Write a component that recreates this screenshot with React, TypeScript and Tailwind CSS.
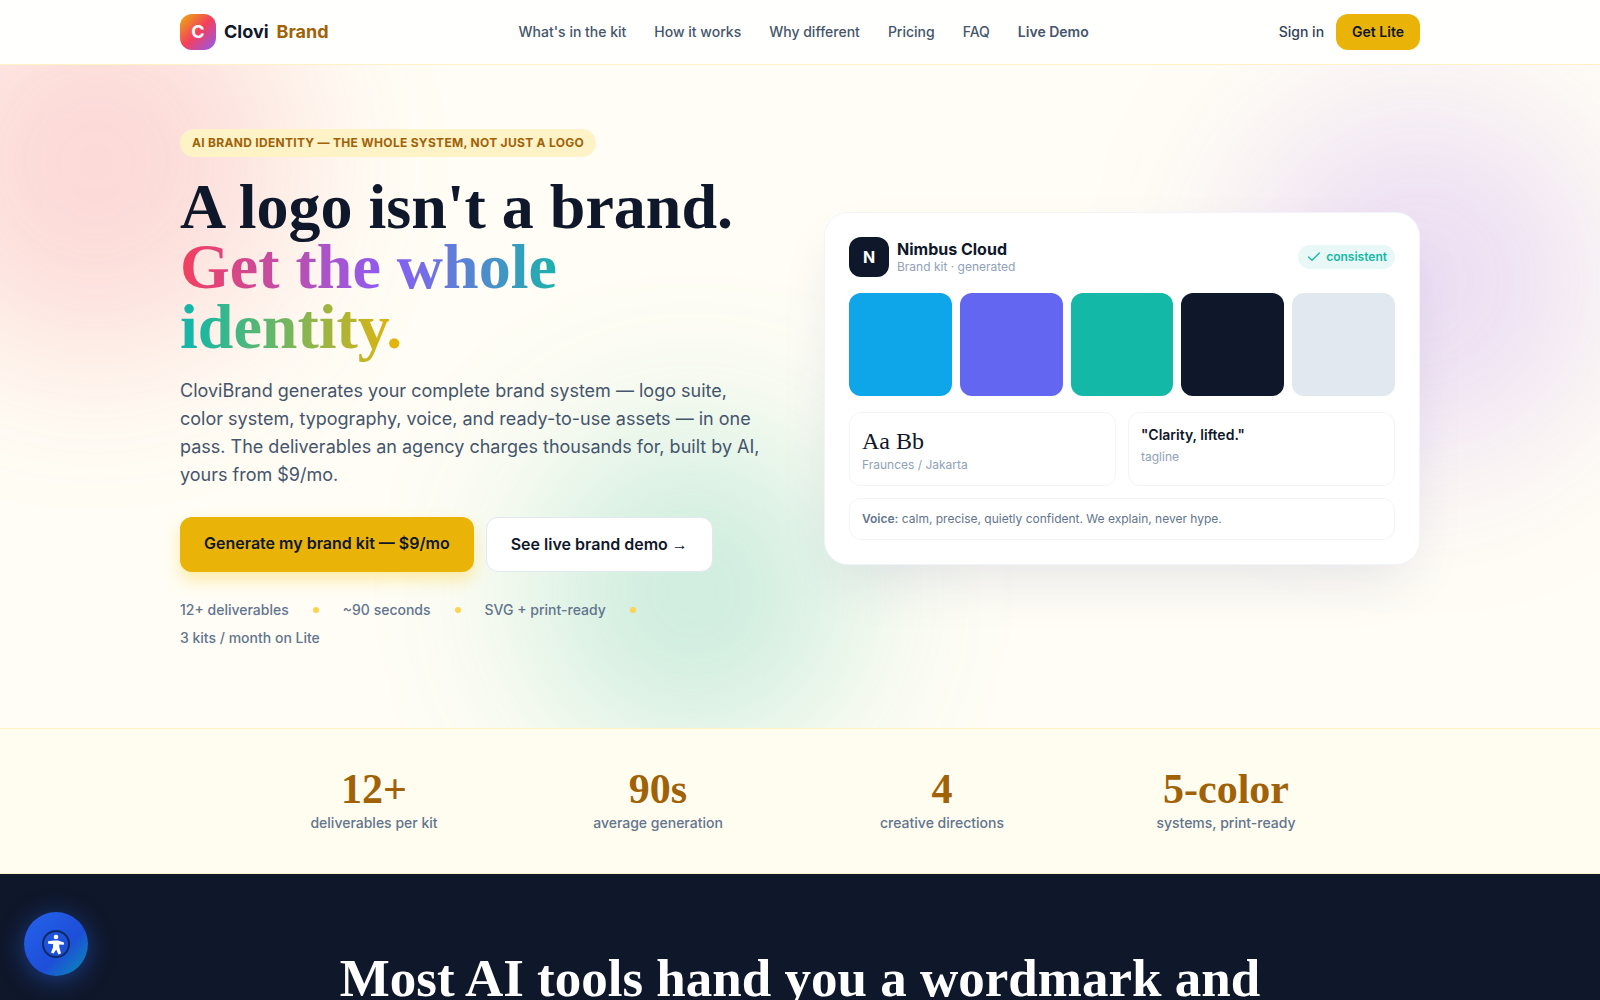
import { Check } from 'lucide-react'

const navLinks = [
  { label: "What's in the kit", href: '#kit' },
  { label: 'How it works', href: '#how' },
  { label: 'Why different', href: '#why' },
  { label: 'Pricing', href: '#pricing' },
  { label: 'FAQ', href: '#faq' },
]

const features = ['12+ deliverables', '~90 seconds', 'SVG + print-ready', '3 kits / month on Lite']

const swatches = ['bg-[#0ea5e9]', 'bg-[#6366f1]', 'bg-[#14b8a6]', 'bg-[#0f172a]', 'bg-[#e2e8f0]']

const stats = [
  { value: '12+', label: 'deliverables per kit' },
  { value: '90s', label: 'average generation' },
  { value: '4', label: 'creative directions' },
  { value: '5-color', label: 'systems, print-ready' },
]

function Header() {
  return (
    <header className="border-b border-[#fef3c7] bg-[#fffffd]">
      <div className="mx-auto flex h-16 max-w-7xl items-center justify-between px-5">
        <a href="#top" className="flex items-center gap-2 text-lg font-bold text-[#0f172a]">
          <span className="flex size-9 items-center justify-center rounded-xl bg-[linear-gradient(135deg,#eab308,#f43f5e_50%,#8b5cf6)] text-white">
            C
          </span>
          <span>Clovi</span>
          <span className="text-[#a16207]">Brand</span>
        </a>
        <nav className="flex items-center gap-7 text-sm font-medium text-slate-600">
          {navLinks.map(({ label, href }) => (
            <a key={label} href={href}>
              {label}
            </a>
          ))}
          <a href="#demo" className="font-semibold">
            Live Demo
          </a>
        </nav>
        <div className="flex items-center gap-3 text-sm">
          <a href="#signin" className="font-medium text-slate-700">
            Sign in
          </a>
          <a href="#lite" className="rounded-xl bg-[#eab308] px-4 py-2 font-semibold text-[#0f172a]">
            Get Lite
          </a>
        </div>
      </div>
    </header>
  )
}

function KitCard() {
  return (
    <div className="rounded-3xl border border-slate-100 bg-white p-6 shadow-[0_24px_60px_-16px_rgba(30,41,120,0.13)]">
      <div className="flex items-center justify-between">
        <div className="flex items-center gap-2">
          <span className="flex size-10 items-center justify-center rounded-xl bg-[#0f172a] font-bold text-white">N</span>
          <div>
            <p className="text-base leading-5 font-bold text-[#0f172a]">Nimbus Cloud</p>
            <p className="text-xs text-slate-400">Brand kit · generated</p>
          </div>
        </div>
        <span className="flex items-center gap-1 rounded-full bg-[#e7f8f6] px-2 py-1 text-xs font-semibold text-[#14b8a6]">
          <Check className="size-4" strokeWidth={2} />
          consistent
        </span>
      </div>
      <div className="mt-4 grid grid-cols-5 gap-2">
        {swatches.map((color) => (
          <div key={color} className={`aspect-square rounded-xl ${color}`} />
        ))}
      </div>
      <div className="mt-4 grid grid-cols-2 gap-3">
        <div className="rounded-xl border border-slate-100 p-3">
          <p className="font-['Liberation_Serif',serif] text-2xl text-[#0f172a]">Aa Bb</p>
          <p className="text-xs text-slate-400">Fraunces / Jakarta</p>
        </div>
        <div className="rounded-xl border border-slate-100 p-3">
          <p className="text-sm font-semibold text-[#0f172a]">"Clarity, lifted."</p>
          <p className="mt-1 text-xs text-slate-400">tagline</p>
        </div>
      </div>
      <p className="mt-3 rounded-xl border border-slate-100 p-3 text-xs text-slate-500">
        <b className="font-semibold">Voice:</b> calm, precise, quietly confident. We explain, never hype.
      </p>
    </div>
  )
}

function Hero() {
  return (
    <section className="relative overflow-hidden bg-[#fffdf5]">
      <div className="absolute -top-24 -left-24 size-96 rounded-full bg-[#ee4a5e]/20 blur-[80px]" />
      <div className="absolute top-9 right-0 size-90 rounded-full bg-[#9355ee]/18 blur-[80px]" />
      <div className="absolute -bottom-6 left-1/3 size-80 rounded-full bg-[#14b08a]/22 blur-[80px]" />
      <div className="relative mx-auto grid max-w-7xl grid-cols-2 items-center gap-12 px-5 pt-16 pb-20">
        <div>
          <p className="w-fit rounded-full bg-[#fef3c7] px-3 py-1.5 text-xs font-bold tracking-wide text-[#a16207]">
            AI BRAND IDENTITY — THE WHOLE SYSTEM, NOT JUST A LOGO
          </p>
          <h1 className="mt-5 font-['Liberation_Serif',serif] text-[64px] leading-[60px] font-bold text-[#0f172a]">
            A logo isn't a brand.
            <br />
            <span className="bg-[linear-gradient(90deg,#f43f5e,#8b5cf6_35%,#14b8a6_65%,#eab308)] bg-clip-text text-transparent">
              Get the whole identity.
            </span>
          </h1>
          <p className="mt-5 max-w-[584px] text-lg leading-7 text-slate-600">
            CloviBrand generates your complete brand system — logo suite, color system, typography, voice, and
            ready-to-use assets — in one pass. The deliverables an agency charges thousands for, built by AI, yours
            from $9/mo.
          </p>
          <div className="mt-7 flex gap-3 font-semibold text-[#0f172a]">
            <a href="#generate" className="rounded-xl bg-[#eab308] px-6 py-3.5 shadow-[0_8px_16px_rgba(250,204,21,0.35)]">
              Generate my brand kit — $9/mo
            </a>
            <a href="#demo" className="rounded-xl border border-slate-200 bg-white px-6 py-3.5">
              See live brand demo <span className="font-['Liberation_Sans',sans-serif] font-normal">→</span>
            </a>
          </div>
          <ul className="mt-7 flex flex-wrap gap-x-6 gap-y-2 text-sm font-medium text-slate-500">
            {features.map((feature, i) => (
              <li key={feature} className="flex items-center gap-6">
                {feature}
                {i < features.length - 1 && <span className="size-1.5 rounded-full bg-[#fcd34d]" />}
              </li>
            ))}
          </ul>
        </div>
        <KitCard />
      </div>
    </section>
  )
}

function Stats() {
  return (
    <section className="border-y border-[#fef3c7] bg-[#fffdf0]">
      <div className="mx-auto grid max-w-6xl grid-cols-4 gap-6 px-5 py-10 text-center">
        {stats.map(({ value, label }) => (
          <div key={label}>
            <p className="font-['Liberation_Serif',serif] text-[42px] leading-10 font-bold text-[#a16207]">{value}</p>
            <p className="mt-1 text-sm font-medium text-slate-500">{label}</p>
          </div>
        ))}
      </div>
    </section>
  )
}

export default function App() {
  return (
    <div id="top" className="flex min-h-screen flex-col bg-[#0f172a] font-[Inter,sans-serif]">
      <Header />
      <main>
        <Hero />
        <Stats />
        <section className="px-5 pt-20 text-center">
          <h2 className="font-['Liberation_Serif',serif] text-[53px] leading-12 font-bold text-white">
            Most AI tools hand you a wordmark and
          </h2>
        </section>
      </main>
      <button
        type="button"
        aria-label="Accessibility options"
        className="fixed bottom-6 left-6 flex size-16 items-center justify-center rounded-full bg-[linear-gradient(135deg,#2563eb,#1d4ed8_60%,#0891b2)] shadow-[0_4px_24px_rgba(37,99,235,0.5)]"
      >
        <svg viewBox="0 0 28 28" className="size-7" aria-hidden="true">
          <circle cx="14" cy="14" r="13" fill="none" stroke="#0f2a66" strokeWidth="2" />
          <circle cx="14" cy="7" r="2.3" fill="#fff" />
          <path
            d="M6 11.2 L12 10.6 H16 L22 12.4 L21.8 14.8 L17.2 14.4 L17.4 17.6 L19 23.6 L16.4 24.4 L14.2 19.4 L11.6 23.4 L9 22.4 L11 17.6 L11 14 L6.2 13.8 Z"
            fill="#fff"
          />
        </svg>
      </button>
    </div>
  )
}
